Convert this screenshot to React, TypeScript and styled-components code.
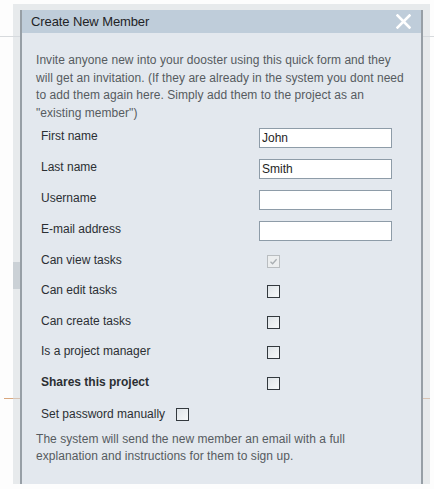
import React from "react";
import styled, { createGlobalStyle } from "styled-components";

const Global = createGlobalStyle`
  html, body { margin: 0; padding: 0; background: #ffffff; }
  body { font-family: Arial, "Liberation Sans", sans-serif; }
  * { box-sizing: border-box; }
`;

const Page = styled.div`
  position: relative;
  width: 434px;
  height: 489px;
  overflow: hidden;
  background: #fdfdfd;
`;

const PageRule = styled.div<{ $top: number; $color: string; $inset?: number }>`
  height: 1px;
  margin: ${(p) => p.$top}px ${(p) => p.$inset ?? 0}px 0;
  background: ${(p) => p.$color};
`;

const PageBand = styled.div<{ $top: number; $h: number }>`
  height: ${(p) => p.$h}px;
  margin: ${(p) => p.$top}px 13px 0;
  background: #bfc6cc;
`;

const Frame = styled.div`
  position: absolute;
  left: 13px;
  top: 4px;
  width: 417px;
  height: 480px;
  padding: 6px 7px 0 7px;
  background: rgba(214, 218, 222, 0.55);
`;

const Dialog = styled.div`
  height: 100%;
  background: #e3e8ee;
  border-left: 2px solid #979fa6;
  border-right: 2px solid #979fa6;
  display: flex;
  flex-direction: column;
`;

const Header = styled.div`
  height: 23px;
  flex: none;
  background: #bfcdda;
  display: flex;
  align-items: center;
  justify-content: space-between;
  padding: 0 10px 0 9px;
`;

const Title = styled.span`
  font-size: 13px;
  color: #1e2326;
  letter-spacing: -0.1px;
`;

const Close = styled.svg`
  width: 15px;
  height: 15px;
  display: block;
`;

const Body = styled.div`
  padding: 19px 14px 0 14px;
`;

const Para = styled.p`
  margin: 0;
  font-size: 12px;
  line-height: 17.5px;
  letter-spacing: 0.05px;
  color: #565b60;
`;

const Form = styled.div`
  display: grid;
  grid-template-columns: 218px 133px;
  margin: 0 0 0 5px;
`;

const Label = styled.div<{ $h: number; $bold?: boolean }>`
  height: ${(p) => p.$h}px;
  display: flex;
  align-items: center;
  padding-bottom: 3px;
  font-size: 12px;
  color: #2b2f33;
  font-weight: ${(p) => (p.$bold ? "bold" : "normal")};
`;

const Cell = styled.div<{ $h: number }>`
  height: ${(p) => p.$h}px;
  display: flex;
  align-items: center;
`;

const TextInput = styled.input`
  width: 133px;
  height: 20px;
  border: 1px solid #8e9ca8;
  background: #ffffff;
  padding: 0 3px 0 2px;
  font-family: Arial, "Liberation Sans", sans-serif;
  font-size: 12px;
  color: #1f1f1f;
  outline: none;
`;

const Box = styled.span<{ $disabled?: boolean; $inset?: number }>`
  display: inline-block;
  width: 13px;
  height: 13px;
  margin-left: ${(p) => p.$inset ?? 0}px;
  border: 1px solid ${(p) => (p.$disabled ? "#b9bdc0" : "#33393e")};
  background: ${(p) =>
    p.$disabled ? "#eceeef" : "linear-gradient(135deg, #dfe4e8 0%, #f7f9fa 100%)"};
  position: relative;
`;

const Tick = styled.svg`
  position: absolute;
  left: 1px;
  top: 1px;
  width: 9px;
  height: 9px;
`;

const InlineRow = styled.div`
  display: flex;
  align-items: center;
  gap: 11px;
  height: 31px;
  margin-left: 5px;
  font-size: 12px;
  color: #2b2f33;
`;

const Foot = styled(Para)`
  margin-top: 1px;
`;

type Row =
  | { label: string; kind: "text"; value?: string }
  | { label: string; kind: "check"; disabled?: boolean; bold?: boolean };

const rows: Row[] = [
  { label: "First name", kind: "text", value: "John" },
  { label: "Last name", kind: "text", value: "Smith" },
  { label: "Username", kind: "text" },
  { label: "E-mail address", kind: "text" },
  { label: "Can view tasks", kind: "check", disabled: true },
  { label: "Can edit tasks", kind: "check" },
  { label: "Can create tasks", kind: "check" },
  { label: "Is a project manager", kind: "check" },
  { label: "Shares this project", kind: "check", bold: true },
];

export default function App() {
  return (
    <>
      <Global />
      <Page>
        <PageRule $top={36} $color="#d7dadd" />
        <PageBand $top={225} $h={27} />
        <PageRule $top={109} $color="#d9a77e" $inset={4} />
        <Frame>
          <Dialog>
            <Header>
              <Title>Create New Member</Title>
              <Close viewBox="0 0 15 15">
                <path d="M1.5 1.5 L13.5 13.5 M13.5 1.5 L1.5 13.5" stroke="#ffffff" strokeWidth="2.6" strokeLinecap="square" />
              </Close>
            </Header>
            <Body>
              <Para>
                Invite anyone new into your dooster using this quick form and they
                <br />
                will get an invitation. (If they are already in the system you dont need
                <br />
                to add them again here. Simply add them to the project as an
                <br />
                "existing member")
              </Para>
              <Form>
                {rows.map((r) => {
                  const h = r.kind === "text" ? 31 : 30.5;
                  return (
                    <React.Fragment key={r.label}>
                      <Label $h={h} $bold={r.kind === "check" && r.bold}>
                        {r.label}
                      </Label>
                      <Cell $h={h}>
                        {r.kind === "text" ? (
                          <TextInput defaultValue={r.value ?? ""} />
                        ) : (
                          <Box $inset={8} $disabled={r.disabled}>
                            {r.disabled && (
                              <Tick viewBox="0 0 9 9">
                                <path d="M1.5 4.8 L3.6 6.8 L7.6 2.2" stroke="#a9aeb2" strokeWidth="1.3" fill="none" />
                              </Tick>
                            )}
                          </Box>
                        )}
                      </Cell>
                    </React.Fragment>
                  );
                })}
              </Form>
              <InlineRow>
                <span>Set password manually</span>
                <Box />
              </InlineRow>
              <Foot>
                The system will send the new member an email with a full
                <br />
                explanation and instructions for them to sign up.
              </Foot>
            </Body>
          </Dialog>
        </Frame>
      </Page>
    </>
  );
}
